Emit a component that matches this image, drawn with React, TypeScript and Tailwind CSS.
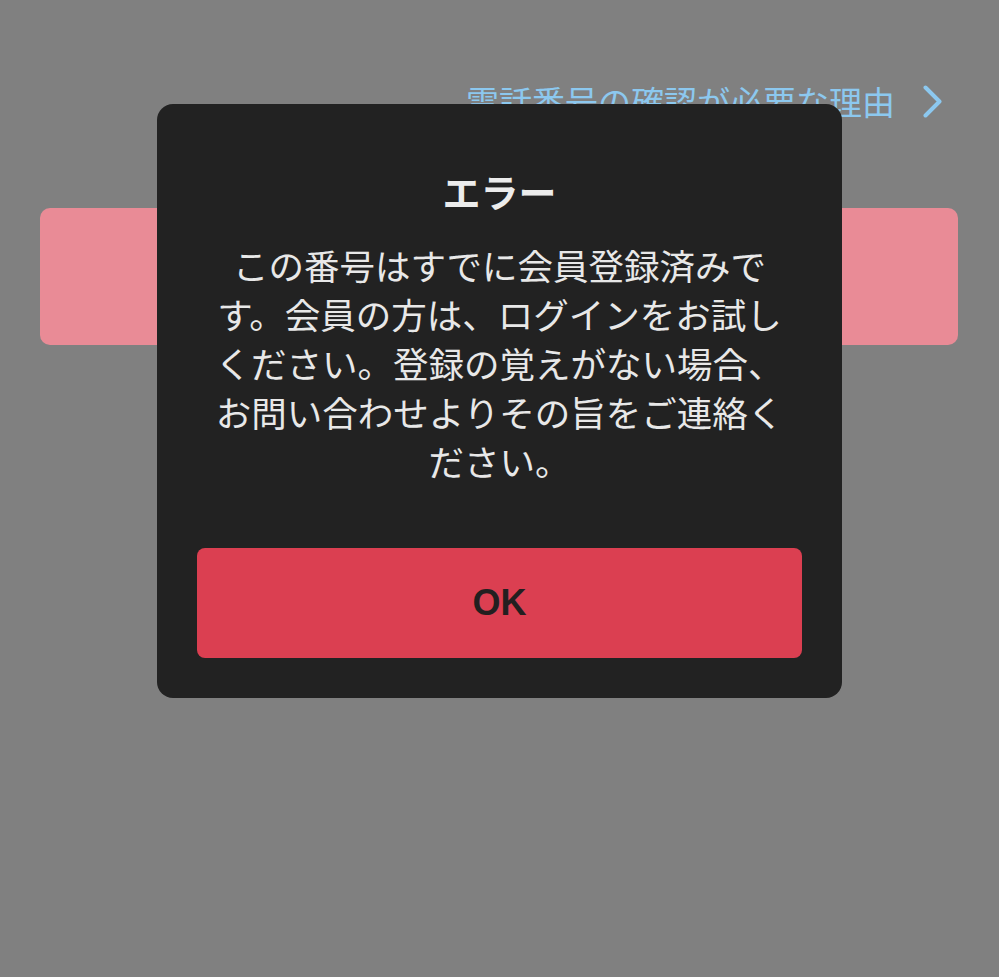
const JP = { fontFamily: '"Noto Sans CJK JP", "Noto Sans", sans-serif' };

function ReasonLink() {
  return (
    <div className="flex items-center justify-end pr-[57px] pt-[76px]">
      <span className="text-[33px] leading-[50px] text-[#8cc8ef]">電話番号の確認が必要な理由</span>
      <svg viewBox="0 0 19 33" className="ml-[28px] h-[33px] w-[19px]" fill="none">
        <path d="M2.5 2.5 L16.5 16.5 L2.5 30.5" stroke="#8cc8ef" strokeWidth="4" strokeLinecap="round" strokeLinejoin="round" />
      </svg>
    </div>
  );
}

function ErrorDialog() {
  return (
    <div className="absolute inset-0 flex items-start justify-center pt-[104px]">
      <div className="w-[685px] rounded-[16px] bg-[#222222] px-[40px] pb-[40px] pt-[62px]">
        <h2 className="text-center text-[38px] font-bold leading-[50px] text-[#ececec]">エラー</h2>
        <p className="mt-[24px] px-[10px] text-center text-[35.5px] leading-[49px] text-[#e8e8e8]">
          この番号はすでに会員登録済みです。会員の方は、ログインをお試しください。登録の覚えがない場合、お問い合わせよりその旨をご連絡ください。
        </p>
        <button
          className="mt-[63px] flex h-[110px] w-full items-center justify-center rounded-[8px] bg-[#db3f51] text-[36px] font-bold text-[#231f20]"
          style={{ fontFamily: '"Liberation Sans", Arial, sans-serif' }}
        >
          OK
        </button>
      </div>
    </div>
  );
}

export default function App() {
  return (
    <div className="relative h-[977px] w-[999px] overflow-hidden bg-[#808080]" style={JP}>
      <ReasonLink />
      <div className="ml-[40px] mr-[41px] mt-[82px] h-[137px] rounded-[10px] bg-[#e98b96]" />
      <ErrorDialog />
    </div>
  );
}
